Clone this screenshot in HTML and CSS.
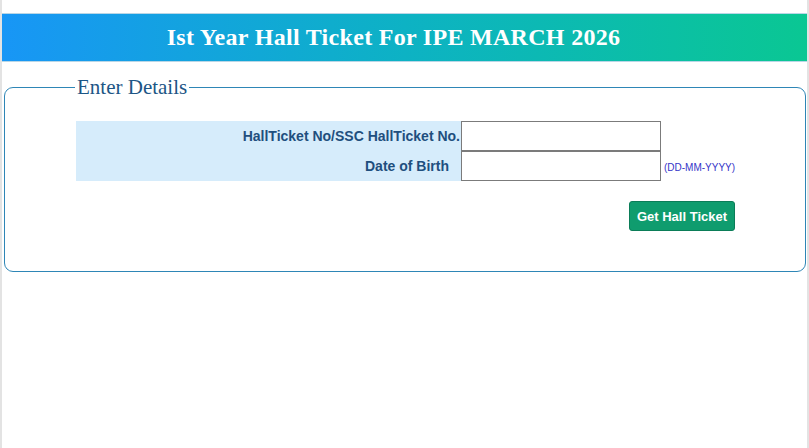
FILE: index.html
```html
<!DOCTYPE html>
<html>
<head>
<meta charset="utf-8">
<link rel="stylesheet" href="styles.css">
</head>
<body>
<div class="page">
  <div class="banner"><h1 class="title">Ist Year Hall Ticket For IPE MARCH 2026</h1></div>
  <fieldset class="box">
    <legend class="legend">Enter Details</legend>
    <div class="form">
      <div class="label label-first">HallTicket No/SSC HallTicket No.</div>
      <input class="field" type="text">
      <div class="hint"></div>
      <div class="label">Date of Birth</div>
      <input class="field" type="text">
      <div class="hint">(DD-MM-YYYY)</div>
      <button class="btn" type="button">Get Hall Ticket</button>
    </div>
  </fieldset>
</div>
</body>
</html>
```

FILE: styles.css
```css
html, body {
  margin: 0;
  padding: 0;
  height: 100%;
  background: #ffffff;
}
.page {
  box-sizing: border-box;
  min-height: 100%;
  border-left: 2px solid #e3e3e3;
  border-right: 2px solid #e3e3e3;
  padding-top: 13px;
  font-family: "Liberation Sans", Arial, sans-serif;
}
.banner {
  height: 47px;
  border-top: 1px solid #b9d6e6;
  border-bottom: 1px solid #b9d6e6;
  background: linear-gradient(90deg, #1896f6 0%, #0db2c4 50%, #0ac793 100%);
  display: flex;
  align-items: center;
  justify-content: center;
  padding-right: 22px;
}
.title {
  margin: 0 0 1px 0;
  color: #ffffff;
  font-family: "Liberation Serif", "Times New Roman", serif;
  font-weight: bold;
  font-size: 24px;
  letter-spacing: 0.3px;
}
.box {
  margin: 13px 1px 0 2px;
  border: 1px solid #2e86b6;
  border-radius: 9px;
  padding: 21px 10px 40px 71px;
}
.legend {
  padding: 0 2px;
  margin-left: -1px;
  font-family: "Liberation Serif", "Times New Roman", serif;
  font-size: 21px;
  color: #1d5686;
}
.form {
  display: grid;
  grid-template-columns: 385px 200px 74px;
  grid-template-rows: 30px 30px;
  width: 659px;
}
.label {
  background: #d6ecfb;
  color: #1f4f7e;
  font-weight: bold;
  font-size: 14px;
  display: flex;
  align-items: center;
  justify-content: flex-end;
  padding-right: 12px;
}
.label-first {
  padding-right: 1px;
}
.field {
  box-sizing: border-box;
  width: 200px;
  height: 30px;
  margin: 0;
  border: 1px solid #7b7b7b;
  background: #ffffff;
}
.hint {
  font-size: 10px;
  color: #3535c8;
  display: flex;
  align-items: center;
  padding-left: 3px;
  padding-top: 2px;
  white-space: nowrap;
}
.btn {
  grid-column: 1 / 4;
  justify-self: end;
  margin-top: 20px;
  height: 30px;
  width: 106px;
  padding: 0;
  background: #0f9c6e;
  border: 1px solid #0b7d58;
  border-radius: 3px;
  color: #ffffff;
  font-family: "Liberation Sans", Arial, sans-serif;
  font-weight: bold;
  font-size: 13px;
}
```
